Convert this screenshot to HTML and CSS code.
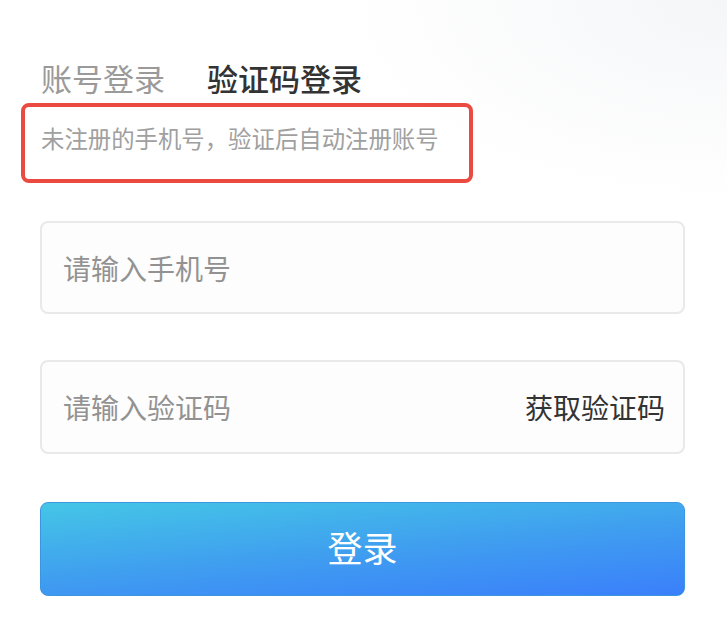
FILE: index.html
```html
<!DOCTYPE html>
<html lang="zh-CN">
<head>
<meta charset="utf-8">
<title>验证码登录</title>
<link rel="stylesheet" href="styles.css">
</head>
<body>
<main class="page">
  <nav class="tabs">
    <span class="tab">账号登录</span>
    <span class="tab tab-active">验证码登录</span>
  </nav>
  <div class="hint">未注册的手机号，验证后自动注册账号</div>
  <div class="field field-phone">
    <input class="field-input" type="tel" placeholder="请输入手机号">
  </div>
  <div class="field field-code">
    <input class="field-input" type="text" placeholder="请输入验证码">
    <span class="get-code">获取验证码</span>
  </div>
  <button class="submit" type="button">登录</button>
</main>
</body>
</html>
```

FILE: styles.css
```css
html, body {
  margin: 0;
  padding: 0;
}

body {
  width: 727px;
  height: 640px;
  overflow: hidden;
  font-family: "Noto Sans CJK SC", "Noto Sans", sans-serif;
  background:
    radial-gradient(ellipse 380px 200px at 100% 0%, #f5f6f8 0%, rgba(255,255,255,0) 100%),
    #ffffff;
}

.page {
  padding: 62px 42px 0 41px;
}

.tabs {
  display: flex;
  gap: 42px;
  font-size: 31px;
  line-height: 31px;
}

.tab {
  color: #9a9a9a;
}

.tab-active {
  color: #333333;
  font-weight: 500;
}

.hint {
  box-sizing: border-box;
  width: 452px;
  height: 80px;
  margin: 10px 0 0 -20px;
  padding: 0 0 10px 16px;
  border: 4px solid #ea4a3f;
  border-radius: 8px;
  display: flex;
  align-items: center;
  font-size: 23.4px;
  color: #a0a0a0;
}

.field {
  box-sizing: border-box;
  height: 93px;
  margin: 38px 0 0 -1px;
  padding: 0 18px 0 21px;
  border: 2px solid #e9e9e9;
  border-radius: 8px;
  background: #fdfdfd;
  display: flex;
  align-items: center;
  justify-content: space-between;
  font-size: 28px;
}

.field-code {
  height: 94px;
  margin-top: 46px;
}

.field-input {
  flex: 1;
  min-width: 0;
  border: none;
  outline: none;
  background: transparent;
  padding: 0;
  font: inherit;
  color: #333333;
}

.field-input::placeholder {
  color: #929292;
}

.get-code {
  color: #333333;
}

.submit {
  display: block;
  box-sizing: border-box;
  width: 645px;
  height: 94px;
  margin: 48px 0 0 -1px;
  border: 1px solid #3c95e0;
  border-radius: 8px;
  background: linear-gradient(175deg, #44c6e6 0%, #3f9cf0 55%, #3a7ffb 100%);
  color: #ffffff;
  font-family: inherit;
  font-size: 35px;
  padding: 0 0 5px;
}
```
